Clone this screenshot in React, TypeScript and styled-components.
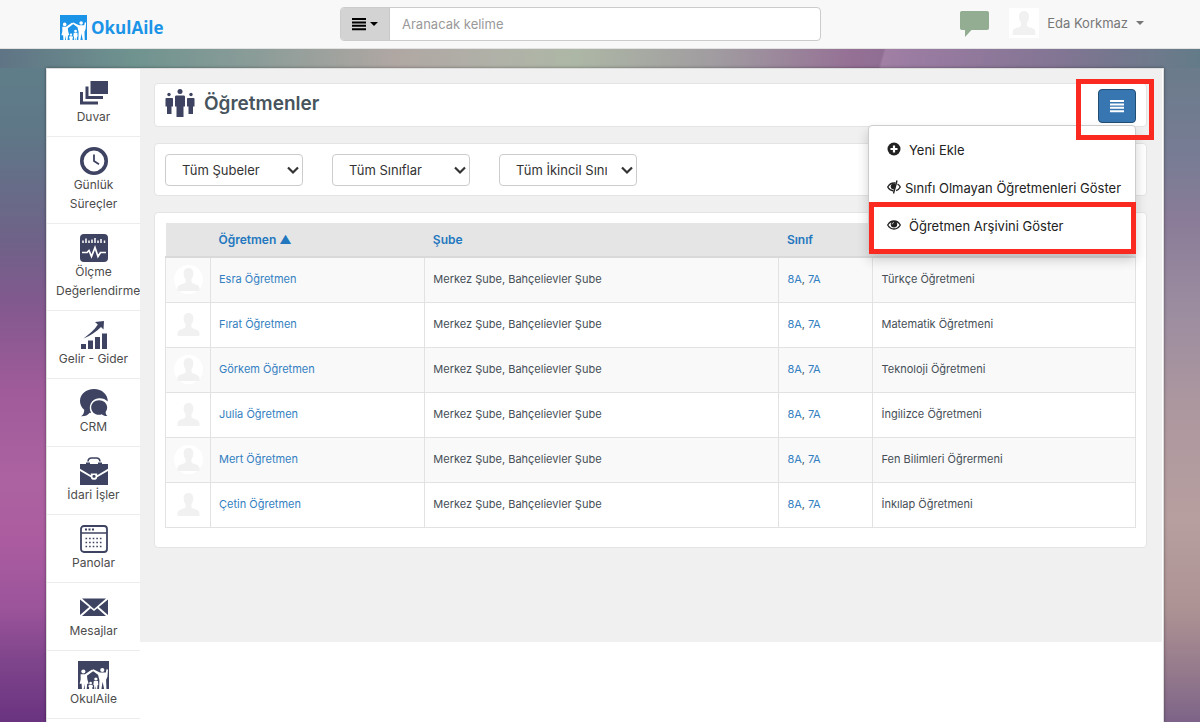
import React from "react";
import styled, { createGlobalStyle } from "styled-components";

const GlobalStyle = createGlobalStyle`
  *, *::before, *::after { box-sizing: border-box; }
  body {
    margin: 0;
    font-family: Inter, "Liberation Sans", sans-serif;
    font-size: 13px;
    color: #454e56;
  }
  a { color: #337fc1; text-decoration: none; }
`;

const Page = styled.div`
  min-height: 100vh;
  background:
    linear-gradient(106deg, transparent 11%, rgba(255, 220, 255, 0.16) 12%, transparent 100%) 868px 0 / 250px 68px no-repeat,
    linear-gradient(to right, #5f7485, #6f938f 11%, #8a9c98 21%, #b0a7a3 33%, #b0b2a8 42%, #adb7a5 48%, #a09ba0 60%, #957095 71%, #8a6c92 76%, #7d708f 88%, #6f7a8c 96%, #637b88) 0 0 / 100% 68px no-repeat,
    linear-gradient(to bottom, #5f7f8a 48px, #5f7787 134px, #6f6288 241px, #83598f 306px, #a05b9a 392px, #ac62a0 478px, #ab5ca0 542px, #9c549a 607px, #7f458c 660px, #6a3380 722px) 0 0 / 50% 100% no-repeat,
    linear-gradient(to bottom, #687b89 48px, #777c94 155px, #8a7c98 220px, #9b8ca0 306px, #ae989f 413px, #b79f9f 520px, #ae9394 607px, #957a8c 671px, #7d6488 722px) 100% 0 / 50% 100% no-repeat;
`;

const TopBar = styled.header`
  display: grid;
  grid-template-columns: 280fr 481fr 323fr;
  align-items: start;
  height: 49px;
  padding: 7px 56px 0 60px;
  background: #f8f8f8;
  border-bottom: 1px solid #e2e2e2;
`;

const Brand = styled.a`
  display: flex;
  align-items: center;
  gap: 4px;
  padding-top: 7px;
  font: 700 17px/27px "Open Sans", "Noto Sans", sans-serif;
  color: #1b94e8;
`;

const Search = styled.form`
  display: flex;
  height: 34px;
  border: 1px solid #ccc;
  border-radius: 4px;
  background: #fff;
  overflow: hidden;
`;

const ScopeButton = styled.button`
  display: flex;
  align-items: center;
  justify-content: center;
  gap: 4px;
  flex: 0 0 49px;
  padding: 0;
  border: 0;
  border-right: 1px solid #c8c8c8;
  background: #d3d3d3;
  color: #000;
`;

const SearchInput = styled.input`
  flex: 1;
  min-width: 0;
  padding: 0 12px;
  border: 0;
  background: none;
  outline: 0;
  font: 13px/20px Inter, sans-serif;
  color: #444;
  &::placeholder { color: #999; opacity: 1; }
`;

const Account = styled.div`
  display: flex;
  justify-content: flex-end;
  align-items: center;
  gap: 20px;
  height: 32px;
`;

const PlainButton = styled.button`
  display: flex;
  align-items: center;
  gap: 8px;
  padding: 0;
  border: 0;
  background: none;
  font: 13px/20px Inter, sans-serif;
  color: #777;
`;

const Caret = styled.span`
  border: 4px solid transparent;
  border-top-color: currentColor;
  border-bottom: 0;
`;

const Shell = styled.div`
  display: flex;
  align-items: flex-start;
  min-height: calc(100vh - 68px);
  margin: 19px 36px 0 46px;
  padding-right: 1px;
  background: #fff;
  border: 1px solid #dcdcdc;
  border-bottom: 0;
  box-shadow: 0 0 3px rgba(0, 0, 0, 0.4);
`;

const Sidebar = styled.nav`
  flex: 0 0 93px;
  width: 93px;
`;

const NavItem = styled.a`
  display: flex;
  flex-direction: column;
  padding: 10px 9px;
  border-bottom: 1px solid #ececec;
  overflow: hidden;
  text-align: center;
  font-size: 12px;
  line-height: 19px;
  color: #4c4c4c;
  svg { display: block; align-self: center; color: #3d4361; }
`;

const Main = styled.main`
  flex: 1;
  min-width: 0;
  display: flex;
  flex-direction: column;
  gap: 16px;
  padding: 14px 15px 94px 14px;
  background: #f0f0f0;
`;

const Panel = styled.section`
  padding: 10px 10px 9px;
  background: #fff;
  border: 1px solid #e4e4e4;
  border-radius: 4px;
`;

const TitlePanel = styled(Panel)`
  display: flex;
  justify-content: space-between;
  height: 44px;
  padding: 4px 10px;
`;

const Title = styled.h1`
  display: flex;
  align-items: center;
  gap: 9px;
  height: 32px;
  margin: 0;
  font-size: 19px;
  line-height: 32px;
  font-weight: 600;
  color: #47545d;
`;

const Actions = styled.div`
  position: relative;
  align-self: flex-start;
`;

const MenuButton = styled.button`
  display: flex;
  align-items: center;
  justify-content: center;
  width: 38px;
  height: 34px;
  margin-top: 1px;
  padding: 0;
  border: 1px solid #204d74;
  border-radius: 4px;
  background: #3776b0;
  color: #fff;
`;

const Highlight = styled.span`
  position: absolute;
  z-index: 3;
  border: 5px solid #fb2a20;
  pointer-events: none;
`;

const ButtonHighlight = styled(Highlight)`
  inset: -9px -18px -17px -22px;
`;

const ItemHighlight = styled(Highlight)`
  inset: -5px -1px -9px 0;
`;

const Menu = styled.ul`
  position: absolute;
  z-index: 2;
  top: 37px;
  right: 0;
  width: 268px;
  margin: 0;
  padding: 5px 0 8px;
  list-style: none;
  background: #fff;
  border: 1px solid #ccc;
  border-radius: 4px;
  box-shadow: 0 6px 12px rgba(0, 0, 0, 0.18);
`;

const MenuItem = styled.li`
  position: relative;
`;

const MenuLink = styled.a<{ $gap: number }>`
  display: flex;
  align-items: center;
  gap: ${(p) => p.$gap}px;
  height: 38px;
  padding-left: 18px;
  font-size: 13px;
  white-space: nowrap;
  color: #222;
  svg { margin-bottom: 3px; flex: none; }
`;

const Filters = styled(Panel)`
  display: flex;
  gap: 29px;
`;

const SelectBox = styled.div`
  position: relative;
  width: 138px;
  svg { position: absolute; right: 4px; top: 10px; pointer-events: none; }
`;

const Select = styled.select`
  appearance: none;
  display: block;
  width: 100%;
  height: 32px;
  padding: 0 29px 0 16px;
  border: 1px solid #ccc;
  border-radius: 4px;
  background: #fff;
  font: 13px/20px Inter, sans-serif;
  color: #333;
`;

const TablePanel = styled(Panel)`
  padding-bottom: 19px;
`;

const Table = styled.table`
  width: 100%;
  table-layout: fixed;
  border-collapse: collapse;
  font-size: 11px;
  line-height: 16px;
`;

const HeadCell = styled.th<{ $width: string }>`
  width: ${(p) => p.$width};
  height: 34px;
  padding: 0 8px;
  background: #e5e5e5;
  border-bottom: 2px solid #d9d9d9;
  text-align: left;
  font-size: 12px;
  font-weight: 600;
  a { color: #2277bf; }
`;

const Row = styled.tr`
  &:nth-child(odd) { background: #f9f9f9; }
`;

const Cell = styled.td`
  height: 45px;
  padding: 0 8px 1px;
  border: 1px solid #e2e2e2;
  svg { display: block; }
`;

function Family({ width, height, color }: { width: number; height: number; color: string }) {
  return (
    <svg width={width} height={height} viewBox="0 0 30 28" preserveAspectRatio="none" aria-hidden="true">
      <path fill={color} d="M0 0h30v28H0z" />
      <g fill="#fff">
        <circle cx="5.2" cy="10.5" r="2" />
        <path d="M2.5 13.2h4.2l6.5-4.4 2.3.8-6.8 5.2.4 3.8 1.2 4.2H8.9L8.4 28H6.6l-.3-5-.8 5H3.8l-.3-5.2H1.6l1-4.6z" />
        <circle cx="23.5" cy="9" r="2" />
        <path d="M21.2 11.6 14.8 8.3l-1.4.9 6 4.6 1.300 5.200-.3 9h2.300l1.100-7.200 1.500 7.200h2.200l-.3-9.200 1.300-3 .5-6.800-1-1.200-.5 1-.6 2.800z" />
        <circle cx="12.2" cy="22" r="1.300" />
        <path d="M10.500 23.800h3.400l.7 2.200-.7.1V28h-3.200v-2l-.7-.2z" />
        <circle cx="17.3" cy="18" r="1.600" />
        <path d="M15.300 20h4l.4 4-.8.3-.3 3.700h-1l-.4-3-.4 3h-1l-.3-4-.7-.3z" />
      </g>
    </svg>
  );
}

function Person({ size, round }: { size: number; round: boolean }) {
  return (
    <svg width={size} height={size} viewBox="0 0 30 30" role="img" aria-label="Profil resmi">
      {round ? <circle cx="15" cy="15" r="15" fill="#fff" /> : <path fill="#fff" d="M0 0h30v30H0z" />}
      <path fill="#f1f1f1" d="M15 3c3.200 0 5 2.300 5 5.500 0 2.600-.6 4.600-2 6.100v2.600c0 1.200 1.600 1.800 4.800 2.900 2.700.9 3.700 2.200 3.700 5.400 0 1-.5 1.500-1.500 1.500H5c-1 0-1.500-.5-1.500-1.500 0-3.200 1-4.500 3.700-5.400 3.200-1.100 4.800-1.700 4.800-2.900v-2.600c-1.400-1.500-2-3.500-2-6.100C10 5.300 11.800 3 15 3z" />
    </svg>
  );
}

function Lines() {
  return (
    <svg width="14" height="14" viewBox="0 0 14 14" aria-hidden="true">
      <path fill="currentColor" d="M0 1h14v2H0zM0 4.400h14v2H0zM0 7.800h14v2H0zM0 11.200h14v2H0z" />
    </svg>
  );
}

function NavIcon({ children }: { children: React.ReactNode }) {
  return (
    <svg width="28" height="28" viewBox="0 0 28 28" fill="currentColor" aria-hidden="true">
      {children}
    </svg>
  );
}

const navItems: { label: string; icon: React.ReactNode }[] = [
  {
    label: "Duvar",
    icon: (
      <NavIcon>
        <path d="M10.500 2H28v13H10.500zM5.500 7.500h3V17H23v3H5.500zM0 13h3v9.500h15v3H0z" />
      </NavIcon>
    ),
  },
  {
    label: "Günlük Süreçler",
    icon: (
      <NavIcon>
        <circle cx="14" cy="14" r="12.200" fill="none" stroke="currentColor" strokeWidth="3.600" />
        <path d="M14 7.500V14l5 3.200" fill="none" stroke="currentColor" strokeWidth="1.800" />
      </NavIcon>
    ),
  },
  {
    label: "Ölçme Değerlendirme",
    icon: (
      <NavIcon>
        <rect width="28" height="28" rx="4" />
        <path d="M3 6.500v2.500M6 4.500v4.500M9 6.500v2.500M12 5.500v3.500M15 4v5M18 6.500v2.500M21 5v4M24.500 6.500v2.500" stroke="#fff" strokeWidth="1.500" />
        <path d="M2 18.500h5l2-2 2.500 6 3.500-9 3 9 2.500-4H26" fill="none" stroke="#fff" strokeWidth="1.700" />
      </NavIcon>
    ),
  },
  {
    label: "Gelir - Gider",
    icon: (
      <NavIcon>
        <path d="M1 23h5v5H1zM8 19.500h5V28H8zM15 16h5v12h-5zM22 12.500h5V28h-5zM15 1l9-1-.5 8.500-2.500-2.500C16 11 10.500 14.500 3.500 17.500 9 13 14.500 9 17.800 3.500z" />
      </NavIcon>
    ),
  },
  {
    label: "CRM",
    icon: (
      <NavIcon>
        <path d="M14 0C6 0 0 5 0 12c0 3.500 1.500 6.500 4.200 8.700.2 3-1.200 5.300-3.200 6.500 4 .2 6.700-1 8.700-3.500l1.500.2C7.500 17.500 11.500 9.500 19 9.200c3.500-.2 6.500 1 8.800 3.300C27.900 5.500 22 0 14 0z" />
        <path d="M19 11.200c-4.500 0-7.800 3.200-7.800 7.300s3.300 7.300 7.800 7.300c1 0 2-.1 2.800-.5 1.500 1.500 3.500 2 5.700 1.700-1.400-.9-2-2.500-1.800-4.300 1-1.300 1.500-2.700 1.500-4.200 0-4.100-3.500-7.300-8.200-7.300z" />
      </NavIcon>
    ),
  },
  {
    label: "İdari İşler",
    icon: (
      <NavIcon>
        <path d="M8 4.500C8.300 1.800 9.500 1 11.500 1h5C18.500 1 19.700 1.800 20 4.500" fill="none" stroke="currentColor" strokeWidth="1.600" />
        <path d="M6 5.500h4V7h8V5.500h4V7h6v4.800l-10.800 6.400v-1.700h-6.400v1.700L0 11.800V7h6zM0 14l10.800 6.200c.3 1.800 1.200 2.600 3.200 2.600s2.900-.8 3.200-2.600L28 14v14H0z" />
        <rect x="12.500" y="18" width="3" height="2.800" rx="1" />
      </NavIcon>
    ),
  },
  {
    label: "Panolar",
    icon: (
      <NavIcon>
        <rect x="1" y="1" width="26" height="26" rx="3" fill="none" stroke="currentColor" strokeWidth="1.800" />
        <path d="M1 8h26" stroke="currentColor" strokeWidth="1.500" />
        <path d="M5 4.500h9" stroke="currentColor" strokeWidth="2" strokeDasharray="2 1.500" />
        <path d="M5.500 13.500h17M5.500 17.500h17M5.500 21.500h17" stroke="currentColor" strokeWidth="1.600" strokeDasharray="1.600 2" />
      </NavIcon>
    ),
  },
  {
    label: "Mesajlar",
    icon: (
      <NavIcon>
        <path d="M2 5.500h24L14 16zM0 6.500l9.200 7.500L0 22zM28 6.500 18.800 14l9.200 8zM10.700 15.200l3.300 2.900 3.300-2.900 8.700 7.800H2z" />
      </NavIcon>
    ),
  },
  { label: "OkulAile", icon: <Family width={31} height={28} color="#3d4361" /> },
];

const filters = ["Tüm Şubeler", "Tüm Sınıflar", "Tüm İkincil Sınıflar"];

const teachers = [
  ["Esra Öğretmen", "Türkçe Öğretmeni"],
  ["Fırat Öğretmen", "Matematik Öğretmeni"],
  ["Görkem Öğretmen", "Teknoloji Öğretmeni"],
  ["Julia Öğretmen", "İngilizce Öğretmeni"],
  ["Mert Öğretmen", "Fen Bilimleri Öğrermeni"],
  ["Çetin Öğretmen", "İnkılap Öğretmeni"],
];

export default function App() {
  return (
    <Page>
      <GlobalStyle />
      <TopBar>
        <Brand href="#">
          <Family width={27} height={25} color="#1b94e8" />
          OkulAile
        </Brand>
        <Search>
          <ScopeButton type="button" aria-label="Arama türü">
            <Lines />
            <Caret />
          </ScopeButton>
          <SearchInput type="text" placeholder="Aranacak kelime" aria-label="Aranacak kelime" />
        </Search>
        <Account>
          <PlainButton type="button" aria-label="Mesajlar">
            <svg width="29" height="27" viewBox="0 0 29 27" aria-hidden="true">
              <path fill="#92ad91" d="M2 1h25c1.300 0 2 .7 2 2v15c0 1.300-.7 2-2 2H11.500L5 27v-7H2c-1.300 0-2-.7-2-2V3c0-1.300.7-2 2-2z" />
            </svg>
          </PlainButton>
          <PlainButton type="button">
            <Person size={30} round={false} />
            Eda Korkmaz
            <Caret />
          </PlainButton>
        </Account>
      </TopBar>

      <Shell>
        <Sidebar>
          {navItems.map((item) => (
            <NavItem href="#" key={item.label}>
              {item.icon}
              {item.label}
            </NavItem>
          ))}
        </Sidebar>

        <Main>
          <TitlePanel>
            <Title>
              <svg width="30" height="30" viewBox="0 0 30 30" fill="#3d4361" aria-hidden="true">
                <circle cx="15" cy="2.500" r="2.500" />
                <path d="M11.500 6.500h7c1 0 1.500.5 1.500 1.500v9.500h-1.500V28h-7V17.500H10V8c0-1 .5-1.500 1.500-1.500z" />
                <circle cx="4" cy="5.500" r="1.700" />
                <path d="M1.500 9H7c.6 0 1 .4 1 1v7.500H6.500V25H2v-7.500H.5V10c0-.6.4-1 1-1z" />
                <circle cx="26" cy="5.500" r="1.700" />
                <path d="M23 9h5.500c.6 0 1 .4 1 1v7.500H28V25h-4.500v-7.500H22V10c0-.6.4-1 1-1z" />
              </svg>
              Öğretmenler
            </Title>
            <Actions>
              <MenuButton type="button" aria-label="Menü" aria-expanded="true">
                <Lines />
              </MenuButton>
              <ButtonHighlight />
              <Menu>
                <MenuItem>
                  <MenuLink href="#" $gap={8}>
                    <svg width="14" height="14" viewBox="0 0 14 14" aria-hidden="true">
                      <circle cx="7" cy="7" r="6.500" fill="#222" />
                      <path d="M7 3.500v7M3.500 7h7" stroke="#fff" strokeWidth="2.200" />
                    </svg>
                    Yeni Ekle
                  </MenuLink>
                </MenuItem>
                <MenuItem>
                  <MenuLink href="#" $gap={4}>
                    <svg width="14" height="14" viewBox="0 0 14 14" fill="none" stroke="#222" aria-hidden="true">
                      <path d="M6.500 11C3.800 10.600 1.800 9 .7 7c1.300-2.300 3.500-4 6.300-4h1.500M10.500 4c1.200.7 2.200 1.700 2.800 3-.9 1.700-2.300 3-4.200 3.700" strokeWidth="1.300" />
                      <path d="M7.500 9.500C5 9.500 3.700 8.300 3.700 6.500 3.700 5 4.700 3.600 7 3.400L8.500 4z" fill="#222" stroke="none" />
                      <path d="M10 .5 6.500 13.500" strokeWidth="1.400" />
                    </svg>
                    Sınıfı Olmayan Öğretmenleri Göster
                  </MenuLink>
                </MenuItem>
                <MenuItem>
                  <MenuLink href="#" $gap={8}>
                    <svg width="14" height="14" viewBox="0 0 14 14" aria-hidden="true">
                      <path d="M.7 7C2 4.700 4.200 3 7 3s5 1.700 6.300 4C12 9.300 9.800 11 7 11S2 9.300.7 7z" fill="none" stroke="#222" strokeWidth="1.300" />
                      <circle cx="7" cy="6.300" r="3.200" fill="#222" />
                      <path d="M5.200 6.300c0-1 .8-1.700 1.800-1.700" fill="none" stroke="#fff" strokeWidth=".8" />
                    </svg>
                    Öğretmen Arşivini Göster
                  </MenuLink>
                  <ItemHighlight />
                </MenuItem>
              </Menu>
            </Actions>
          </TitlePanel>

          <Filters>
            {filters.map((name) => (
              <SelectBox key={name}>
                <Select aria-label={name}>
                  <option>{name}</option>
                </Select>
                <svg width="12" height="12" viewBox="0 0 12 12" fill="none" stroke="#333" strokeWidth="2.200" aria-hidden="true">
                  <path d="M1 3.500l5 5 5-5" />
                </svg>
              </SelectBox>
            ))}
          </Filters>

          <TablePanel>
            <Table>
              <thead>
                <tr>
                  <HeadCell $width="45px" aria-label="Resim" />
                  <HeadCell $width="22.100%"><a href="#">Öğretmen ▲</a></HeadCell>
                  <HeadCell $width="36.500%"><a href="#">Şube</a></HeadCell>
                  <HeadCell $width="9.700%"><a href="#">Sınıf</a></HeadCell>
                  <HeadCell $width="auto" aria-label="Branş" />
                </tr>
              </thead>
              <tbody>
                {teachers.map(([name, branch]) => (
                  <Row key={name}>
                    <Cell><Person size={29} round /></Cell>
                    <Cell><a href="#">{name}</a></Cell>
                    <Cell>Merkez Şube, Bahçelievler Şube</Cell>
                    <Cell><a href="#">8A</a>, <a href="#">7A</a></Cell>
                    <Cell>{branch}</Cell>
                  </Row>
                ))}
              </tbody>
            </Table>
          </TablePanel>
        </Main>
      </Shell>
    </Page>
  );
}
